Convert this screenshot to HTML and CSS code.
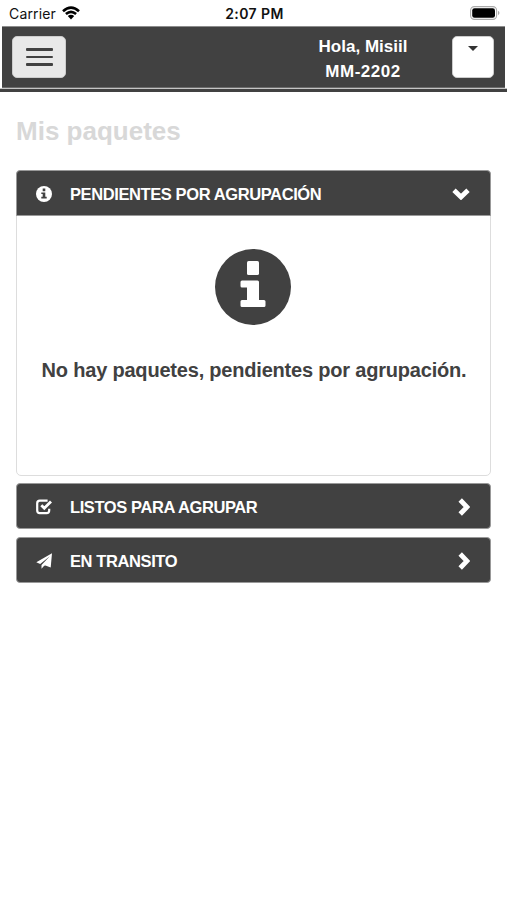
FILE: index.html
```html
<!DOCTYPE html>
<html lang="es">
<head>
    <meta charset="UTF-8">
    <meta name="viewport" content="width=device-width, initial-scale=1.0">
    <title>Mis paquetes</title>
    <link rel="stylesheet" href="styles.css">
</head>
<body>
    <div class="status-bar">
        <div class="carrier">
            <span>Carrier</span>
            <svg class="wifi" viewBox="0 0 18 14">
                <path d="M1 5.2Q9-2 17 5.2M3.9 8Q9 3.6 14.1 8" fill="none" stroke="#000" stroke-width="2.6"/>
                <path d="M5.8 10.1Q9 7.4 12.2 10.1L9 13.5z"/>
            </svg>
        </div>
        <div class="time">2:07 PM</div>
        <svg class="battery" viewBox="0 0 30 14">
            <rect x=".6" y=".6" width="26" height="12.8" rx="3.8" fill="#fff" stroke="#aaa" stroke-width="1.1"/>
            <rect x="2.2" y="2.2" width="22.8" height="9.6" rx="2.3"/>
            <path d="M28 4.8q3 2.2 0 4.4z" fill="#aaa"/>
        </svg>
    </div>

    <header class="navbar">
        <button class="menu-btn" aria-label="Menú">
            <span></span>
            <span></span>
            <span></span>
        </button>
        <div class="user">
            <div>Hola, Misiil</div>
            <div class="code">MM-2202</div>
        </div>
        <button class="user-btn" aria-label="Usuario"><span class="caret"></span></button>
    </header>
    <div class="navbar-line"></div>

    <main>
        <h1>Mis paquetes</h1>

        <section class="panel open">
            <div class="panel-heading">
                <svg class="icon" viewBox="0 0 16 16">
                    <circle cx="8" cy="8" r="8" fill="#fff"/>
                    <path d="M6.7 2.4h2.6v2.8H6.7zM5.3 6.5h4v4.3h1.4v1.7H5.3v-1.7h1.4V8H5.3z" fill="#414141"/>
                </svg>
                <h2>PENDIENTES POR AGRUPACIÓN</h2>
                <svg class="chevron down" viewBox="0 0 18 12">
                    <path d="M2 2.2l7 6.8 7-6.8" fill="none" stroke="#fff" stroke-width="4.8"/>
                </svg>
            </div>
            <div class="panel-body">
                <svg class="info" viewBox="0 0 76 76">
                    <circle cx="38" cy="38" r="38" fill="#414141"/>
                    <g fill="#fff">
                        <rect x="32" y="12" width="12" height="14" rx="1.6"/>
                        <path d="M27 31.5h15.5q1.5 0 1.5 1.5v18h5q1.5 0 1.5 1.5v4q0 1.5-1.5 1.5h-22q-1.5 0-1.5-1.5v-4q0-1.5 1.5-1.5h5V38.5h-5q-1.5 0-1.5-1.5v-4q0-1.5 1.5-1.5z"/>
                    </g>
                </svg>
                <p>No hay paquetes, pendientes por agrupación.</p>
            </div>
        </section>

        <section class="panel">
            <div class="panel-heading">
                <svg class="icon" viewBox="0 0 16 16">
                    <path d="M11.6 1.7H3.8Q1.2 1.7 1.2 4.3v7.2q0 2.6 2.6 2.6h6.8q2.6 0 2.6-2.6V9.8" fill="none" stroke="#fff" stroke-width="2.2"/>
                    <path d="M5.3 6.2l3 3 6.7-6.8" fill="none" stroke="#fff" stroke-width="2.8"/>
                </svg>
                <h2>LISTOS PARA AGRUPAR</h2>
                <svg class="chevron" viewBox="0 0 12 18">
                    <path d="M2.2 2l6.8 7-6.8 7" fill="none" stroke="#fff" stroke-width="4.8"/>
                </svg>
            </div>
        </section>

        <section class="panel">
            <div class="panel-heading">
                <svg class="icon" viewBox="0 0 16 16">
                    <path d="M16 .2L.3 9.2l3.9 1.7L13.8 3.3 5.5 11.9v3.9l2.7-3 1.2-.4 5.3 2.2z" fill="#fff"/>
                </svg>
                <h2>EN TRANSITO</h2>
                <svg class="chevron" viewBox="0 0 12 18">
                    <path d="M2.2 2l6.8 7-6.8 7" fill="none" stroke="#fff" stroke-width="4.8"/>
                </svg>
            </div>
        </section>
    </main>
</body>
</html>
```

FILE: styles.css
```css
* {
    box-sizing: border-box;
}

body {
    margin: 0;
    background-color: #fff;
    color: #414141;
    font-family: "Liberation Sans", Arial, Helvetica, sans-serif;
}

svg {
    display: block;
}

.status-bar {
    display: grid;
    grid-template-columns: 1fr auto 1fr;
    align-items: center;
    height: 26px;
    padding: 0 7px 0 9px;
    color: #111;
    font-family: Inter, sans-serif;
    font-size: 14px;
}

.carrier {
    display: flex;
    align-items: center;
    gap: 6px;
    letter-spacing: 0.15px;
}

.wifi {
    width: 18px;
    height: 14px;
}

.time {
    font-weight: 600;
    letter-spacing: 0.4px;
}

.battery {
    width: 30px;
    height: 14px;
    justify-self: end;
}

.navbar {
    display: flex;
    align-items: center;
    height: 62px;
    margin: 0 2px;
    padding: 0 11px 0 10px;
    background-color: #414141;
    border-top: 1px solid #8c8c8c;
    border-bottom: 1px solid #6a6a6a;
}

.menu-btn {
    display: flex;
    flex-direction: column;
    align-items: center;
    justify-content: center;
    gap: 5px;
    width: 54px;
    height: 42px;
    padding: 0;
    background-color: #e8e8e8;
    border: 1px solid #ccc;
    border-radius: 5px;
}

.menu-btn span {
    width: 27px;
    height: 2.4px;
    border-radius: 1px;
    background-color: #414141;
}

.user {
    width: 110px;
    margin-left: auto;
    margin-right: 34px;
    padding-top: 4px;
    color: #fff;
    font-size: 17px;
    font-weight: bold;
    line-height: 25px;
    text-align: center;
    white-space: nowrap;
}

.code {
    letter-spacing: 0.5px;
}

.user-btn {
    display: flex;
    justify-content: center;
    width: 42px;
    height: 42px;
    padding: 9px 0 0;
    background-color: #fff;
    border: 1px solid #ccc;
    border-radius: 5px;
}

.caret {
    width: 0;
    height: 0;
    border-top: 5px solid #333;
    border-left: 5px solid transparent;
    border-right: 5px solid transparent;
}

.navbar-line {
    height: 4px;
    background-color: #414141;
    border-top: 1px solid #c4c4c4;
}

main {
    padding: 23px 16px 0;
}

h1 {
    margin: 0 0 23px;
    color: #d8d8d8;
    font-size: 26px;
    line-height: 32px;
}

.panel {
    margin-bottom: 8px;
}

.panel-heading {
    display: flex;
    align-items: center;
    height: 46px;
    padding: 1px 20px 0 19px;
    background-color: #414141;
    border: 1px solid #999;
    border-radius: 4px;
}

.icon {
    width: 16px;
    height: 16px;
    margin-right: 18px;
}

h2 {
    margin: 0;
    padding-top: 1px;
    color: #fff;
    font-size: 16.5px;
    line-height: 20px;
    letter-spacing: -0.4px;
    white-space: nowrap;
}

.chevron {
    width: 12px;
    height: 18px;
    margin-left: auto;
}

.chevron.down {
    width: 18px;
    height: 12px;
}

.open {
    height: 306px;
    margin-bottom: 7px;
    border: 1px solid #ddd;
    border-radius: 5px;
}

.open .panel-heading {
    margin: -1px -1px 0;
    border-radius: 4px 4px 0 0;
}

.panel-body {
    display: flex;
    flex-direction: column;
    align-items: center;
    padding: 33px 2px 0 0;
}

.info {
    width: 76px;
    height: 76px;
}

.panel-body p {
    margin: 33px 0 0;
    padding-left: 3px;
    font-size: 20px;
    font-weight: bold;
    line-height: 24px;
    letter-spacing: -0.2px;
    white-space: nowrap;
}
```
